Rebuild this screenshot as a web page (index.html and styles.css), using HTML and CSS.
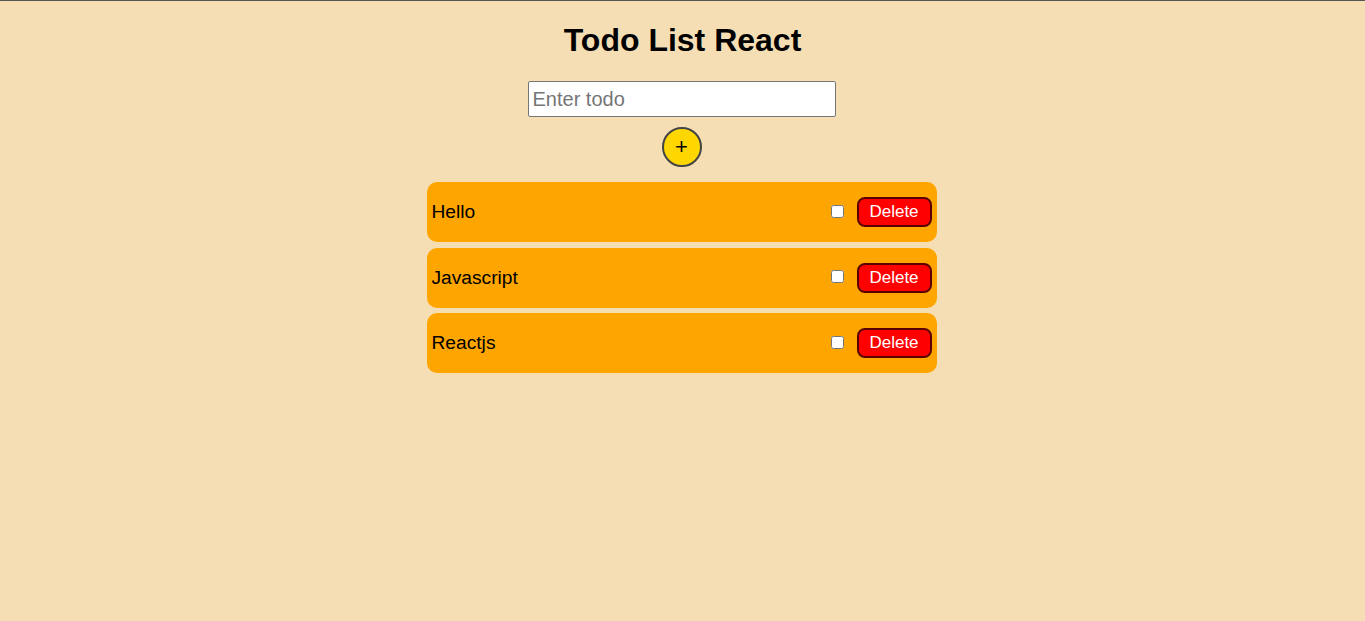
FILE: index.html
```html
<!DOCTYPE html>
<html>
<head>
<meta charset="utf-8">
<title>Todo List React</title>
<link rel="stylesheet" href="styles.css">
</head>
<body>
<div class="app">
  <h1 class="title">Todo List React</h1>
  <input class="todo-input" type="text" placeholder="Enter todo">
  <button class="add-btn">+</button>
  <ul class="todo-list">
    <li class="todo-item">
      <span class="todo-text">Hello</span>
      <input class="todo-check" type="checkbox">
      <button class="delete-btn">Delete</button>
    </li>
    <li class="todo-item">
      <span class="todo-text">Javascript</span>
      <input class="todo-check" type="checkbox">
      <button class="delete-btn">Delete</button>
    </li>
    <li class="todo-item">
      <span class="todo-text">Reactjs</span>
      <input class="todo-check" type="checkbox">
      <button class="delete-btn">Delete</button>
    </li>
  </ul>
</div>
</body>
</html>
```
FILE: styles.css
```css
html, body {
  margin: 0;
  padding: 0;
  height: 100%;
}
body {
  background: #f5deb3;
  border-top: 1px solid #555;
  box-sizing: border-box;
  font-family: "Liberation Sans", Arial, sans-serif;
}
.app {
  display: flex;
  flex-direction: column;
  align-items: center;
  padding-right: 2px;
}
.title {
  font-size: 32px;
  font-weight: bold;
  margin: 21px 0 0;
  padding-left: 2px;
  line-height: 37px;
}
.todo-input {
  margin-top: 22px;
  width: 308px;
  height: 36px;
  box-sizing: border-box;
  border: 1px solid #767676;
  border-radius: 2px;
  background: #fff;
  font-family: "Liberation Sans", Arial, sans-serif;
  font-size: 20px;
  padding: 0 4px;
}
.todo-input::placeholder {
  color: #757575;
}
.add-btn {
  margin-top: 10px;
  width: 40px;
  height: 40px;
  border-radius: 50%;
  background: #ffd700;
  border: 2px solid #444;
  font-size: 22px;
  font-family: "Liberation Sans", Arial, sans-serif;
  color: #000;
  padding: 0;
  line-height: 1;
}
.todo-list {
  list-style: none;
  margin: 15px 0 0;
  padding: 0;
  width: 510px;
  display: flex;
  flex-direction: column;
  gap: 5px;
}
.todo-item {
  display: flex;
  align-items: center;
  height: 60px;
  box-sizing: border-box;
  padding: 0 5px;
  background: #ffa500;
  border-radius: 10px;
}
.todo-item + .todo-item {
  margin-top: 0.5px;
}
.todo-text {
  flex: 1;
  font-size: 19.2px;
  color: #000;
}
.todo-check {
  width: 13px;
  height: 13px;
  margin: 0 13px 0 0;
  position: relative;
  top: -1px;
}
.delete-btn {
  width: 75px;
  height: 30px;
  background: #ff0000;
  color: #fff;
  border: 2px solid #5a0000;
  border-radius: 8px;
  font-size: 17px;
  font-family: "Liberation Sans", Arial, sans-serif;
  padding: 0;
}
```
